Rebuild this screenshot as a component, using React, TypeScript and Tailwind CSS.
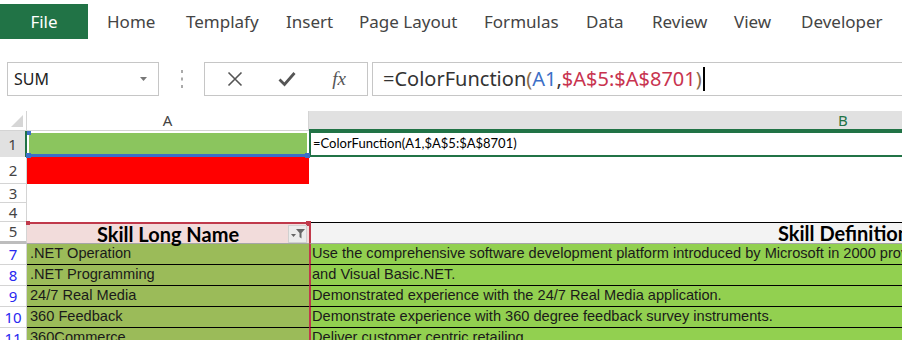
import React from "react";

const tabs: [string, number][] = [
  ["Home", 79],
  ["Templafy", 100],
  ["Insert", 73],
  ["Page Layout", 125],
  ["Formulas", 102],
  ["Data", 66],
  ["Review", 82],
  ["View", 67],
  ["Developer", 90],
];

const rows: { n: string; a: string; b: string }[] = [
  { n: "7", a: ".NET Operation", b: "Use the comprehensive software development platform introduced by Microsoft in 2000 provides" },
  { n: "8", a: ".NET Programming", b: "and Visual Basic.NET." },
  { n: "9", a: "24/7 Real Media", b: "Demonstrated experience with the 24/7 Real Media application." },
  { n: "10", a: "360 Feedback", b: "Demonstrate experience with 360 degree feedback survey instruments." },
  { n: "11", a: "360Commerce", b: "Deliver customer centric retailing" },
];

const ui = { fontFamily: '"Noto Sans", "Open Sans", sans-serif' };
const cal = { fontFamily: 'Lato, "Noto Sans", sans-serif' };
const tah = { fontFamily: '"Liberation Sans", Arial, sans-serif' };

const rh = "w-[27px] shrink-0 flex items-center justify-center text-[15px] leading-none";

export default function App() {
  return (
    <div className="w-[902px] h-[340px] overflow-hidden bg-white relative">
      {/* Ribbon tabs */}
      <div className="flex h-[62px] pt-[4px] items-start" style={ui}>
        <div className="w-[88px] h-[35px] bg-[#217346] text-white text-[17px] flex items-center justify-center">
          File
        </div>
        <div className="flex ml-[19px] h-[35px] items-center text-[17px] text-[#444]">
          {tabs.map(([t, w]) => (
            <div key={t} style={{ width: w }} className="whitespace-nowrap">
              {t}
            </div>
          ))}
        </div>
      </div>

      {/* Formula bar */}
      <div className="flex h-[34px] items-stretch">
        <div className="ml-[7px] w-[152px] shrink-0 border border-[#c6c6c6] flex items-center justify-between pl-[6px] pr-[11px]" style={ui}>
          <span className="text-[16px] text-[#222]">SUM</span>
          <svg width="7" height="4" viewBox="0 0 7 4"><path d="M0 0h7L3.5 4z" fill="#777" /></svg>
        </div>
        <div className="w-[45px] shrink-0 flex items-center justify-center">
          <svg width="4" height="20" viewBox="0 0 4 20">
            <rect x="1" y="1" width="2" height="3" fill="#aaa" />
            <rect x="1" y="8.5" width="2" height="3" fill="#aaa" />
            <rect x="1" y="16" width="2" height="3" fill="#aaa" />
          </svg>
        </div>
        <div className="w-[164px] shrink-0 border border-[#c6c6c6] flex items-center">
          <div className="w-[58px] flex justify-center pl-[2px]">
            <svg width="16" height="16" viewBox="0 0 16 16"><path d="M1.5 1.5l13 13M14.5 1.5l-13 13" stroke="#555" strokeWidth="1.6" /></svg>
          </div>
          <div className="w-[48px] flex justify-center">
            <svg width="18" height="16" viewBox="0 0 18 16"><path d="M1.5 8.5l5 5L16.5 2" stroke="#555" strokeWidth="2.8" fill="none" /></svg>
          </div>
          <div className="flex-1 flex justify-center text-[19px] italic text-[#555]" style={{ fontFamily: '"Liberation Serif", serif' }}>
            fx
          </div>
        </div>
        <div className="ml-[4px] flex-1 min-w-0 border-y border-l border-[#c6c6c6] flex items-center pl-[10px] text-[20px] text-[#333] whitespace-nowrap" style={ui}>
          <span>=ColorFunction</span>
          <span className="text-[#8a6b4a]">(</span>
          <span className="text-[#3c6fc7]">A1</span>
          <span>,</span>
          <span className="text-[#c8334f]">$A$5:$A$8701</span>
          <span className="text-[#8a6b4a]">)</span>
          <span className="w-[2px] h-[24px] bg-black ml-[1px]" />
        </div>
      </div>

      {/* Grid */}
      <div className="mt-[15px]" style={cal}>
        {/* column headers */}
        <div className="flex h-[20px]">
          <div className="w-[27px] shrink-0 border-r border-[#d4d4d4] border-b flex items-end justify-end pr-[3px] pb-[3px]">
            <svg width="12" height="12" viewBox="0 0 12 12"><path d="M12 0v12H0z" fill="#d6d6d6" /></svg>
          </div>
          <div className="w-[282px] shrink-0 border-r border-b border-[#d4d4d4] flex items-center justify-center text-[15px] text-[#444]" style={ui}>
            A
          </div>
          <div className="flex-1 min-w-0 bg-[#e1e1e1] border-b-2 border-[#217346] flex items-center text-[15px] text-[#217346] pl-[529px]" style={ui}>
            B
          </div>
        </div>

        {/* Row 1 */}
        <div className="flex h-[26px]">
          <div className={`${rh} bg-[#e1e1e1] border-r-2 border-[#217346] text-[#444]`} style={ui}>1</div>
          <div className="w-[282px] shrink-0 relative bg-[#8bc55e] border-2 border-white border-b-[3px] border-b-[#3c6fc7]">
            <div className="absolute -left-[2px] -top-[2px] w-[4px] h-[4px] bg-[#3c6fc7]" />
            <div className="absolute -left-[3px] -bottom-[4px] w-[5px] h-[5px] bg-[#3c6fc7]" />
            <div className="absolute -right-[3px] -bottom-[4px] w-[5px] h-[5px] bg-[#3c6fc7]" />
          </div>
          <div className="flex-1 min-w-0 border-y-2 border-l-2 border-[#217346] flex items-center pl-[2px] text-[13px] text-black whitespace-nowrap">
            =ColorFunction(A1,$A$5:$A$8701)
          </div>
        </div>

        {/* Row 2 */}
        <div className="flex h-[27px]">
          <div className={`${rh} border-r border-b border-[#d4d4d4] text-[#444]`} style={ui}>2</div>
          <div className="w-[282px] shrink-0 bg-[#ff0000]" />
          <div className="flex-1" />
        </div>
        {/* Row 3 */}
        <div className="flex h-[19px]">
          <div className={`${rh} border-r border-b border-[#d4d4d4] text-[#444]`} style={ui}>3</div>
          <div className="w-[282px] shrink-0" />
          <div className="flex-1" />
        </div>
        {/* Row 4 */}
        <div className="flex h-[19px]">
          <div className={`${rh} border-r border-b border-[#d4d4d4] text-[#444]`} style={ui}>4</div>
          <div className="w-[282px] shrink-0" />
          <div className="flex-1" />
        </div>

        {/* Row 5 */}
        <div className="flex h-[22px]">
          <div className={`${rh} border-r border-b-[3px] border-b-[#bdbdbd] border-r-[#d4d4d4] text-[#444]`} style={ui}>5</div>
          <div className="w-[282px] shrink-0 relative bg-[#f2dcdb] border-t-2 border-[#c0394b] border-b border-b-[#a6a6a6] flex items-center justify-center text-[20px] font-bold text-black">
            <span>Skill Long Name</span>
            <div className="absolute -left-[1px] -top-[3px] w-[4px] h-[4px] bg-[#c0394b]" />
            <div className="absolute -right-[2px] -top-[3px] w-[5px] h-[5px] bg-[#c0394b]" />
            <div className="absolute right-[2px] top-[1px] w-[19px] h-[18px] bg-[#ececec] border border-[#d0d0d0] flex items-center justify-center">
              <svg width="14" height="12" viewBox="0 0 14 12">
                <path d="M5 1h9L10.5 5v5.5L8.5 9V5z" fill="#666" />
                <path d="M0 6h5L2.5 9z" fill="#666" />
              </svg>
            </div>
          </div>
          <div className="flex-1 min-w-0 overflow-hidden bg-[#f3f3f3] border-t border-black border-b border-b-[#a6a6a6] border-l-2 border-l-[#c0394b] flex items-center pl-[467px] text-[20px] font-bold text-black whitespace-nowrap">
            Skill Definition
          </div>
        </div>

        {/* Data rows */}
        {rows.map((r) => (
          <div key={r.n} className="flex h-[21px]">
            <div className={`${rh} border-r border-b border-[#d4d4d4] text-[#2828f0]`} style={ui}>{r.n}</div>
            <div className="w-[282px] shrink-0 bg-[#9bbb59] border-b border-black flex items-center pl-[3px] text-[14.6px] text-[#1a1a1a] whitespace-nowrap overflow-hidden" style={tah}>
              {r.a}
            </div>
            <div className="flex-1 min-w-0 bg-[#92d050] border-b border-black border-l-2 border-l-[#c0394b] flex items-center pl-[1px] text-[14.6px] text-[#1a1a1a] whitespace-nowrap overflow-hidden" style={tah}>
              {r.b}
            </div>
          </div>
        ))}
      </div>
    </div>
  );
}
